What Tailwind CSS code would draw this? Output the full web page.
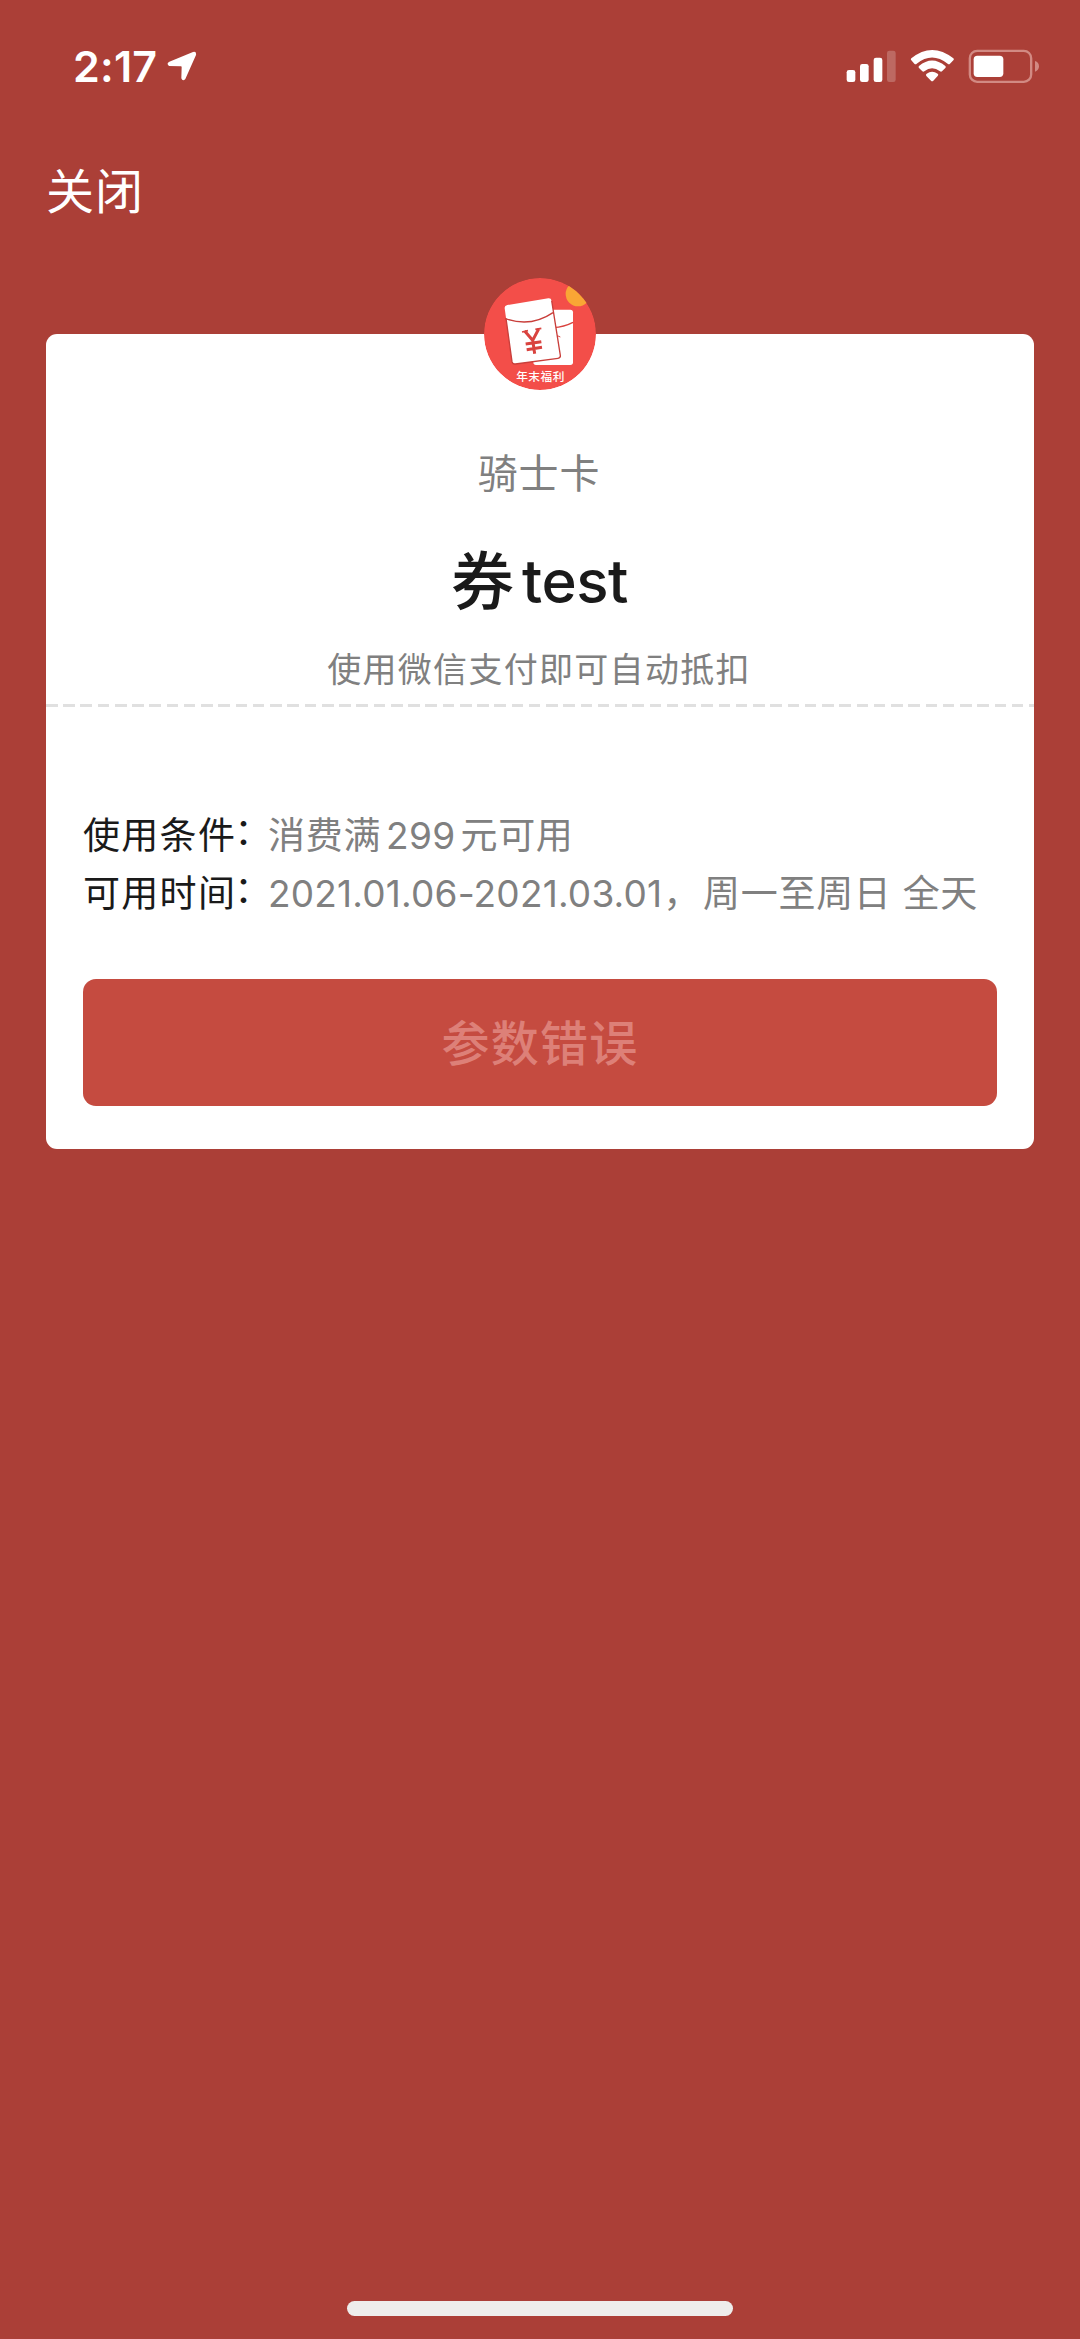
<!DOCTYPE html>
<html lang="zh-CN">
<head>
<meta charset="utf-8">
<title>骑士卡</title>
<script src="https://cdn.jsdelivr.net/npm/@tailwindcss/browser@4"></script>
</head>
<body class="bg-[#ab3f37]">
<main class="flex h-[2339px] w-[1080px] flex-col overflow-hidden bg-[#ab3f37] font-['Inter','Noto_Sans_CJK_SC',sans-serif] whitespace-nowrap">
  <header class="flex h-[134px] shrink-0 items-start pl-[73px] pr-[39px] text-white">
    <div class="mt-[42px] text-[43px] font-semibold leading-[48px] tracking-[0.2px]">2:17</div>
    <svg class="ml-[10px] mt-[51px] h-[30px] w-[30px]" viewBox="411 63 90 90" fill="currentColor"><path d="M489 66 418 95Q408 101 417 108L453 109Q455 109 455 112L454 145Q458 156 466 147L498 75Q500 63 489 66Z"/></svg>
    <div class="ml-auto mt-[46px] flex">
      <svg class="h-10 w-[50px]" viewBox="78 48 150 120" fill="currentColor"><rect x="80" y="120" width="26" height="36" rx="7"/><rect x="120" y="102" width="26" height="54" rx="7"/><rect x="161" y="83" width="26" height="73" rx="7"/><rect x="201" y="62" width="26" height="94" rx="7" opacity=".22"/></svg>
      <svg class="ml-[14px] h-10 w-[45px]" viewBox="270 48 135 120" fill="currentColor"><path d="M274 85Q336 35 400 85Q403 88 400 91L390 101Q387 104 383 101Q336 64 290 101Q287 104 283 101L274 91Q271 88 274 85Z"/><path d="M297 108Q336 75 376 108Q379 111 376 114L366 124Q363 126 360 124Q336 105 313 124Q310 126 307 124L297 114Q294 111 297 108Z"/><path d="M320 131Q336 119 353 131Q357 134 353 138L340 152Q336 156 333 152L319 138Q316 134 320 131Z"/></svg>
      <svg class="ml-[13px] h-10 w-[73px]" viewBox="444 48 219 120" fill="currentColor"><rect x="449.500" y="62.500" width="184" height="93" rx="22" fill="none" stroke="#d28a83" stroke-width="7"/><rect x="461" y="77" width="89" height="64" rx="11"/><path d="M645 93Q657 97 657 109T645 125Z" fill="#d28a83"/></svg>
    </div>
  </header>
  <nav class="h-[200px] shrink-0 pl-[46px] pt-[27px] text-[48px] leading-[62px] tracking-[1px] text-white">关闭</nav>
  <section class="relative mx-[46px] flex h-[815px] shrink-0 flex-col rounded-[11px] bg-white text-[#808080]">
    <svg class="absolute left-[438px] top-[-56px] h-28 w-28" viewBox="42 39 336 336">
      <defs><clipPath id="badge"><circle cx="210" cy="207" r="168"/></clipPath></defs>
      <g clip-path="url(#badge)">
        <circle cx="210" cy="207" r="168" fill="#f34e49"/>
        <circle cx="324" cy="87" r="37" fill="#f9a635"/>
        <rect x="190" y="134" width="119" height="166" rx="8" fill="#fff"/>
        <path d="M250 188Q282 186 309 172" fill="none" stroke="#d9433f" stroke-width="4"/>
        <path d="M262 212 271 216" stroke="#d9433f" stroke-width="3"/>
        <path d="M112 120 235 100Q243 99 245 107L271 271Q272 279 264 280L136 297Q128 298 126 290L104 130Q103 122 112 120Z" fill="#fff"/>
        <path d="M245 107 271 271Q272 279 264 280L136 297Q128 298 126 290L108 160" fill="none" stroke="#c93f3b" stroke-width="4"/>
        <path d="M106 161Q183 188 249 143" fill="none" stroke="#c93f3b" stroke-width="4"/>
        <path d="M164 198 188 226 206 192M188 225 194 266M167 237 214 230M170 254 216 247" fill="none" stroke="#d9433f" stroke-width="9"/>
        <path d="M156 201 174 197M196 193 214 190" stroke="#d9433f" stroke-width="5"/>
        <text x="211.500" y="347" text-anchor="middle" font-size="35" letter-spacing="1.500" font-weight="500" fill="#fff">年末福利</text>
      </g>
    </svg>
    <h2 class="mt-[110px] pr-[2px] text-center text-[40px] leading-[60px] tracking-[0.8px]">骑士卡</h2>
    <h1 class="mt-[32px] flex h-[90px] justify-center gap-[8px] pr-px text-[60px] font-medium leading-[90px] text-[#1a1a1a]"><span class="text-[63px]">券</span><span class="tracking-[-0.5px]">test</span></h1>
    <p class="mt-[19px] pr-[2px] text-center text-[34px] leading-[50px] tracking-[1.3px]">使用微信支付即可自动抵扣</p>
    <div class="mt-[9px] h-[3px] w-full bg-[repeating-linear-gradient(90deg,#e0e0e0_0px,#e0e0e0_11.500px,transparent_11.500px,transparent_17.250px)]"></div>
    <dl class="mt-[100px] flex flex-col px-[37px] text-[37px] leading-[58px]">
      <div class="flex h-[58px]"><dt class="flex w-[185px] tracking-[1.3px] text-[#1a1a1a]">使用条件<span class="-ml-[2px] -mt-[4px]">：</span></dt><dd class="tracking-[0.7px]">消费满<span class="mx-[5px] tracking-[0.3px]">299</span>元可用</dd></div>
      <div class="flex h-[58px]"><dt class="flex w-[185px] tracking-[1.3px] text-[#1a1a1a]">可用时间<span class="-ml-[2px] -mt-[4px]">：</span></dt><dd class="flex"><span class="tracking-[0.2px]">2021.01.06-2021.03.01</span><span class="ml-px tracking-[0.7px]">，<span class="ml-[2px]">周一至周日 全天</span></span></dd></div>
    </dl>
    <button class="mx-[37px] mt-[56px] h-[127px] rounded-[13px] bg-[#c54b40] pt-[2px] text-[48px] font-medium leading-[125px] tracking-[1.2px] text-[#dd8078]">参数错误</button>
  </section>
  <div class="mx-auto mb-[23px] mt-auto h-[15px] w-[386px] rounded-full bg-[#eeedeb]"></div>
</main>
</body>
</html>
